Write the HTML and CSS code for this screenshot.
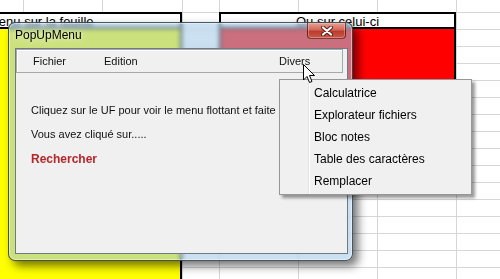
FILE: index.html
```html
<!DOCTYPE html>
<html lang="fr">
<head>
    <meta charset="UTF-8">
    <title>PopUpMenu</title>
    <link rel="stylesheet" href="styles.css">
</head>
<body>
    <div class="sheet">
        <div class="head head-left">Menu sur la feuille</div>
        <div class="head head-right">Ou sur celui-ci</div>
        <div class="yellow"></div>
        <div class="red"></div>
    </div>

    <div class="window">
        <div class="titlebar">
            <span class="title">PopUpMenu</span>
            <button class="close">
                <svg width="14" height="10" viewBox="0 0 14 10">
                    <path d="M3 1.5 L11 8.5 M11 1.5 L3 8.5" stroke="#5a1a14" stroke-width="4" stroke-linecap="round"/>
                    <path d="M3 1.5 L11 8.5 M11 1.5 L3 8.5" stroke="#fff" stroke-width="2.2" stroke-linecap="round"/>
                </svg>
            </button>
        </div>
        <div class="client">
            <div class="menubar">
                <span>Fichier</span>
                <span>Edition</span>
                <span>Divers</span>
            </div>
            <p class="info">Cliquez sur le UF pour voir le menu flottant et faite un choix</p>
            <p class="info">Vous avez cliqué sur.....</p>
            <p class="result">Rechercher</p>
        </div>
    </div>

    <ul class="popup">
        <li>Calculatrice</li>
        <li>Explorateur fichiers</li>
        <li>Bloc notes</li>
        <li>Table des caractères</li>
        <li>Remplacer</li>
    </ul>

    <svg class="cursor" width="13" height="20" viewBox="0 0 13 20">
        <path d="M0.5 0.5 L0.5 16 L4 12.5 L6.5 18.5 L9 17.5 L6.5 11.5 L11.5 11.5 Z" fill="#fff" stroke="#000" stroke-width="1" stroke-linejoin="round"/>
    </svg>
</body>
</html>
```

FILE: styles.css
```css
* {
    box-sizing: border-box;
}

body {
    margin: 0;
    width: 500px;
    height: 279px;
    overflow: hidden;
    background: #fff;
    font-family: "Liberation Sans", Arial, sans-serif;
}

/* feuille excel en fond */
.sheet {
    display: grid;
    grid-template-columns: 23px 79px 80px 37px 79px 79px 79px 1fr;
    grid-template-rows: 12px repeat(16, 17px);
    height: 279px;
    background-image:
        linear-gradient(to right,
            transparent 23px, #d6d6d6 23px 24px,
            transparent 24px 102px, #d6d6d6 102px 103px,
            transparent 103px 182px, #d6d6d6 182px 183px,
            transparent 183px 219px, #d6d6d6 219px 220px,
            transparent 220px 298px, #d6d6d6 298px 299px,
            transparent 299px 377px, #d6d6d6 377px 378px,
            transparent 378px 456px, #d6d6d6 456px 457px,
            transparent 457px),
        repeating-linear-gradient(to bottom, transparent 0 16px, #d6d6d6 16px 17px);
    background-position: 0 0, 0 -4px;
}

.head {
    grid-row: 2;
    border: 2px solid #000;
    background: #fff;
    font-size: 13px;
    line-height: 15px;
    white-space: nowrap;
    overflow: hidden;
}

.head-left {
    grid-column: 1 / 4;
    border-left: none;
    text-indent: -12px;
}

.head-right {
    grid-column: 5 / 8;
    text-align: center;
}

.yellow {
    grid-column: 1 / 4;
    grid-row: 3 / 18;
    background: #ffff00;
    border-right: 2px solid #000;
}

.red {
    grid-column: 5 / 8;
    grid-row: 3 / 9;
    background: #ff0000;
    border: 2px solid #000;
    border-top: none;
}

/* fenetre UserForm */
.window {
    position: absolute;
    left: 8px;
    top: 22px;
    width: 345px;
    height: 239px;
    display: flex;
    flex-direction: column;
    border: 1px solid rgba(30, 40, 50, 0.75);
    border-radius: 7px;
    background: rgba(160, 200, 230, 0.55);
    backdrop-filter: blur(2px);
    box-shadow: inset 0 0 0 1px rgba(255, 255, 255, 0.45), 5px 5px 10px rgba(0, 0, 0, 0.55);
}

.titlebar {
    height: 25px;
    display: flex;
    justify-content: space-between;
    align-items: flex-start;
    padding-left: 6px;
    padding-right: 6px;
}

.title {
    margin-top: 5px;
    font-size: 12px;
    line-height: 14px;
    color: #000;
    text-shadow: 0 0 6px rgba(255, 255, 255, 0.9);
}

.close {
    width: 39px;
    height: 16px;
    padding: 0;
    display: flex;
    align-items: center;
    justify-content: center;
    border: 1px solid rgba(70, 20, 20, 0.7);
    border-top: none;
    border-radius: 0 0 4px 4px;
    background: linear-gradient(to bottom, #e6a093 0, #d2695c 45%, #bb3b2d 55%, #c9584a 100%);
    box-shadow: inset 0 0 0 1px rgba(255, 220, 210, 0.35);
}

.client {
    flex: 1;
    margin: 0 4px 6px 6px;
    border: 1px solid #6e7a86;
    background: #f0f0f0;
    overflow: hidden;
    font-size: 11px;
    color: #111;
}

.menubar {
    height: 24px;
    margin-right: 4px;
    display: grid;
    grid-template-columns: 71px 175px auto;
    align-items: center;
    padding-left: 16px;
    border: 1px solid #a8a8a8;
    box-shadow: inset 1px 1px 0 #fff;
    font-size: 11px;
}

.info {
    margin: 0 0 11px 15px;
    line-height: 13px;
    white-space: nowrap;
}

.info:first-of-type {
    margin-top: 31px;
}

.result {
    margin: 0 0 0 15px;
    font-size: 12px;
    font-weight: bold;
    line-height: 14px;
    color: #b5262a;
}

/* menu flottant */
.popup {
    position: absolute;
    left: 279px;
    top: 79px;
    width: 193px;
    margin: 0;
    padding: 2px 2px;
    list-style: none;
    background: #f0f0f0 linear-gradient(to right, transparent 28px, #e2e3e3 28px 29px, #fff 29px 30px, transparent 30px);
    border: 1px solid #979797;
    box-shadow: 3px 3px 3px rgba(0, 0, 0, 0.4);
    font-size: 12px;
}

.popup li {
    height: 22px;
    line-height: 22px;
    padding-left: 32px;
    color: #000;
}

.cursor {
    position: absolute;
    left: 303px;
    top: 64px;
}
```
